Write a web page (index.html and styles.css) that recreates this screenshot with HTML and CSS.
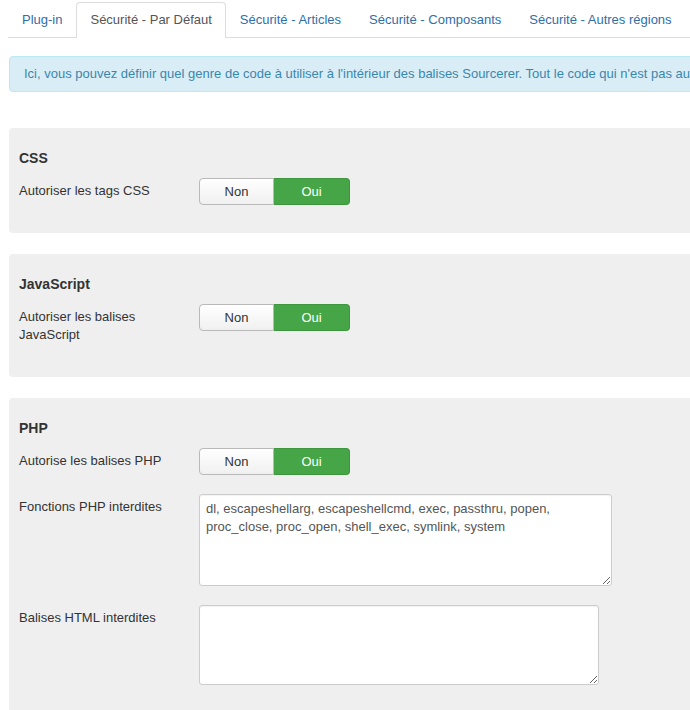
FILE: index.html
```html
<!DOCTYPE html>
<html lang="fr">
<head>
<meta charset="utf-8">
<title>Sourcerer - Sécurité</title>
<link rel="stylesheet" href="styles.css">
</head>
<body>
<div class="page">
  <ul class="tabs">
    <li class="tab"><a href="#">Plug-in</a></li>
    <li class="tab active"><a href="#">Sécurité - Par Défaut</a></li>
    <li class="tab"><a href="#">Sécurité - Articles</a></li>
    <li class="tab"><a href="#">Sécurité - Composants</a></li>
    <li class="tab"><a href="#">Sécurité - Autres régions</a></li>
  </ul>

  <div class="alert">Ici, vous pouvez définir quel genre de code à utiliser à l'intérieur des balises Sourcerer. Tout le code qui n'est pas autorisé sera supprimé.</div>

  <div class="panel">
    <h3 class="panel-title">CSS</h3>
    <div class="control-group">
      <div class="control-label">Autoriser les tags CSS</div>
      <div class="controls">
        <div class="btn-group">
          <span class="btn">Non</span>
          <span class="btn btn-on">Oui</span>
        </div>
      </div>
    </div>
  </div>

  <div class="panel">
    <h3 class="panel-title">JavaScript</h3>
    <div class="control-group">
      <div class="control-label">Autoriser les balises JavaScript</div>
      <div class="controls">
        <div class="btn-group">
          <span class="btn">Non</span>
          <span class="btn btn-on">Oui</span>
        </div>
      </div>
    </div>
  </div>

  <div class="panel">
    <h3 class="panel-title">PHP</h3>
    <div class="control-group">
      <div class="control-label">Autorise les balises PHP</div>
      <div class="controls">
        <div class="btn-group">
          <span class="btn">Non</span>
          <span class="btn btn-on">Oui</span>
        </div>
      </div>
    </div>
    <div class="control-group control-group-text">
      <div class="control-label">Fonctions PHP interdites</div>
      <div class="controls">
        <textarea class="field field-wide">dl, escapeshellarg, escapeshellcmd, exec, passthru, popen, proc_close, proc_open, shell_exec, symlink, system</textarea>
      </div>
    </div>
    <div class="control-group control-group-text">
      <div class="control-label">Balises HTML interdites</div>
      <div class="controls">
        <textarea class="field field-narrow"></textarea>
      </div>
    </div>
  </div>
</div>
</body>
</html>
```

FILE: styles.css
```css
html {
  overflow: hidden;
}

body {
  margin: 0;
  font-family: "Liberation Sans", Arial, sans-serif;
  font-size: 13px;
  line-height: 18px;
  color: #333;
  background: #fff;
}

.page {
  width: 1100px;
  padding: 2px 0 0 8px;
}

.tabs {
  list-style: none;
  margin: 0 0 18px 0;
  padding: 0;
  display: flex;
  border-bottom: 1px solid #ddd;
}

.tab a {
  display: block;
  padding: 8px 13px;
  line-height: 18px;
  border: 1px solid transparent;
  border-bottom: 0;
  border-radius: 4px 4px 0 0;
  color: #2f6ea8;
  text-decoration: none;
  margin-bottom: -1px;
}

.tab.active a {
  color: #555;
  background: #fff;
  border-color: #ddd;
  padding-bottom: 9px;
}

.alert {
  margin-left: 1px;
  padding: 8px 14px;
  line-height: 18px;
  background: #d9edf7;
  border: 1px solid #bce8f1;
  border-radius: 4px;
  color: #3a87ad;
  white-space: nowrap;
  overflow: hidden;
  margin-bottom: 36px;
}

.panel {
  margin-left: 1px;
  background: #efefef;
  border-radius: 4px;
  padding: 20px 10px 10px;
  margin-bottom: 21px;
}

.panel-title {
  margin: 0 0 10px;
  font-size: 14px;
  line-height: 20px;
  font-weight: bold;
  color: #333;
}

.control-group {
  display: flex;
  margin-bottom: 18px;
}

.control-group-text {
  padding-top: 1px;
}

.control-label {
  width: 160px;
  padding: 4px 20px 5px 0;
  line-height: 18px;
  color: #333;
}

.controls {
  flex: none;
}

.btn-group {
  display: flex;
}

.btn {
  display: block;
  box-sizing: border-box;
  height: 27px;
  line-height: 25px;
  text-align: center;
  font-size: 13px;
  color: #333;
  background: linear-gradient(#ffffff, #f0f0f0);
  border: 1px solid #b9b9b9;
  width: 75px;
  border-radius: 4px 0 0 4px;
}

.btn-on {
  width: 76px;
  color: #fff;
  background: #46a546;
  border-color: #3e963e;
  border-left: 0;
  border-radius: 0 4px 4px 0;
}

.field {
  display: block;
  box-sizing: border-box;
  margin: 0;
  padding: 5px 6px;
  font-family: "Liberation Sans", Arial, sans-serif;
  font-size: 13px;
  line-height: 18px;
  color: #555;
  background: #fff;
  border: 1px solid #ccc;
  border-radius: 3px;
  box-shadow: inset 0 1px 1px rgba(0, 0, 0, 0.05);
}

.field-wide {
  width: 413px;
  height: 92px;
}

.field-narrow {
  width: 400px;
  height: 80px;
}
```
